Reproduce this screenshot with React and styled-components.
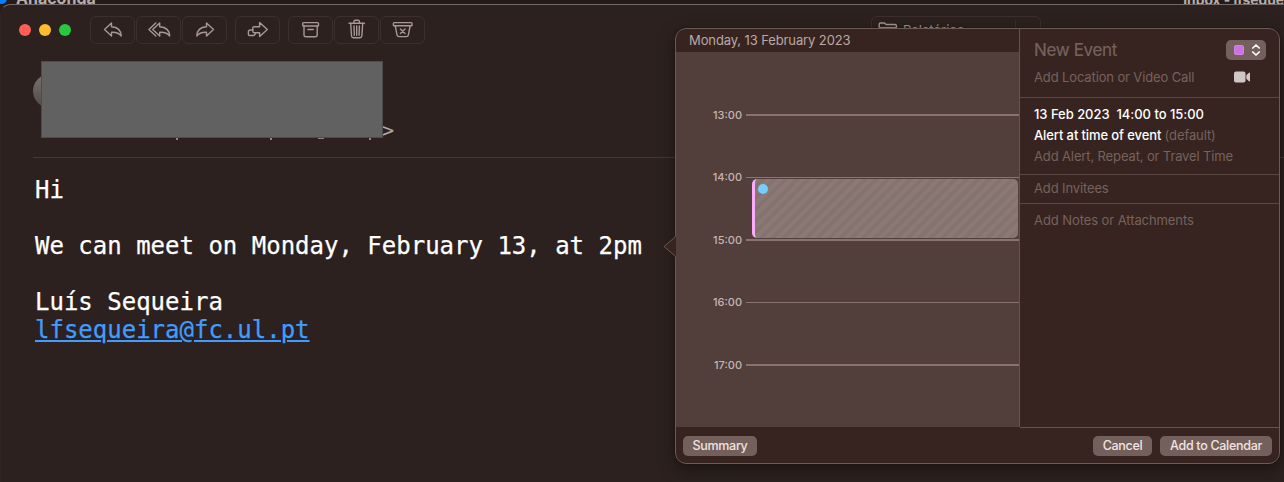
import React from "react";
import styled, { createGlobalStyle } from "styled-components";

const GlobalStyle = createGlobalStyle`
  body {
    margin: 0;
    background: #241b19;
    font-family: Inter, "Liberation Sans", sans-serif;
    overflow: hidden;
  }
`;

const Screen = styled.div`
  position: relative;
  width: 1284px;
  height: 482px;
  overflow: hidden;
  display: flex;
  flex-direction: column;
`;

const BackStrip = styled.div`
  height: 4px;
  display: flex;
  justify-content: space-between;
  align-items: flex-end;
  overflow: hidden;
  background: #241b19;
`;

const BackTitle = styled.span`
  font-size: ${(props) => props.$size}px;
  line-height: 16px;
  margin-bottom: ${(props) => props.$drop || 0}px;
  font-weight: 700;
  color: #b5aeac;
  white-space: nowrap;
`;

const BackLeft = styled.div`
  display: flex;
  align-items: flex-end;
  gap: 9px;
`;

const BlueDot = styled.i`
  width: 11px;
  height: 11px;
  margin-left: -4px;
  border-radius: 50%;
  background: #0a7cff;
`;

const Window = styled.div`
  flex: 1;
  background: #2c211e;
  border-top: 1px solid #736967;
  border-left: 1px solid #2f2522;
  border-top-left-radius: 10px;
`;

const Toolbar = styled.div`
  display: flex;
  align-items: center;
  height: 28px;
  padding: 11px 0 0 18px;
`;

const Lights = styled.div`
  display: flex;
  gap: 8px;
  margin-right: 19px;
`;

const Light = styled.i`
  width: 12px;
  height: 12px;
  border-radius: 50%;
  background: ${(props) => props.$color};
`;

const ButtonGroup = styled.div`
  display: flex;
  gap: 1px;
  margin-right: 8px;
`;

const ToolButton = styled.div`
  box-sizing: border-box;
  width: 45px;
  height: 28px;
  border: 1px solid #3b302d;
  border-radius: 6px;
  display: flex;
  align-items: center;
  justify-content: center;
`;

const FolderButton = styled.div`
  box-sizing: border-box;
  width: 170px;
  height: 28px;
  margin-left: 438px;
  padding-left: 6px;
  border: 1px solid #3b302d;
  border-radius: 6px;
  display: flex;
  align-items: center;
  gap: 5px;
  font-size: 13px;
  color: #a0928f;

  span {
    flex: 1;
  }
`;

const FolderMore = styled.div`
  width: 24px;
  height: 20px;
  border-left: 1px solid #3b302d;
`;

const MailHeader = styled.div`
  display: flex;
  align-items: flex-start;
  height: 96px;
  margin: 17px 0 0 32px;
  border-bottom: 1px solid #433835;
`;

const Avatar = styled.div`
  width: 34px;
  height: 34px;
  margin-top: 13px;
  border-radius: 50%;
  background: linear-gradient(#77726f, #504b49);
`;

const Redacted = styled.div`
  box-sizing: border-box;
  width: 342px;
  height: 77px;
  margin-left: -26px;
  background: #616161;
  border: 1px solid #4f4b4a;
  z-index: 1;
`;

const Cover = styled.div`
  display: flex;
  flex-direction: column;
`;

const Descenders = styled.div`
  display: flex;
  padding-left: 109px;
`;

const Tail = styled.i`
  width: ${(props) => props.$width || 2}px;
  height: ${(props) => (props.$width ? 1 : 2)}px;
  margin-right: ${(props) => props.$gap}px;
  background: #8d8583;
`;

const Bracket = styled.span`
  margin: 57px 0 0 -1px;
  font-family: "DejaVu Sans Mono", monospace;
  font-size: 20px;
  line-height: 24px;
  color: #b3aaa8;
`;

const MailBody = styled.div`
  padding: 18px 0 0 34px;
  font-family: "DejaVu Sans Mono", monospace;
  font-size: 24px;
  line-height: 28px;
  color: #fff;
  -webkit-text-stroke: 0.25px currentColor;

  p {
    margin: 0 0 28px;
  }
`;

const MailLink = styled.a`
  color: #419cff;
  text-decoration: underline;
  text-decoration-thickness: 2px;
  text-underline-offset: 2px;
`;

const Popover = styled.div`
  position: absolute;
  left: 675px;
  top: 28px;
  box-sizing: border-box;
  width: 605px;
  height: 436px;
  border: 1px solid #6b5b57;
  border-radius: 11px;
  background: #372420;
  box-shadow: 0 5px 18px rgba(0, 0, 0, 0.4), 0 0 1px #000;
  display: flex;
  flex-direction: column;
`;

const Pointer = styled.svg`
  position: absolute;
  left: -14px;
  top: 205px;
`;

const Columns = styled.div`
  display: flex;
  height: 398px;
`;

const DayColumn = styled.div`
  width: 343px;
  display: flex;
  flex-direction: column;
`;

const DayTitle = styled.div`
  height: 23px;
  padding-left: 13px;
  font-size: 13px;
  line-height: 23px;
  letter-spacing: -0.11px;
  color: #b9a9a6;
`;

const Timeline = styled.div`
  position: relative;
  box-sizing: border-box;
  height: 375px;
  padding-top: 31.5px;
  background: #523f3c;
`;

const HourRow = styled.div`
  height: 62.5px;
  display: flex;
  align-items: center;
  gap: 4px;
  font-size: 11px;
  font-weight: 500;
  color: #c5b5b2;

  span {
    width: 66px;
    text-align: right;
  }

  &::after {
    content: "";
    flex: 1;
    height: 1.5px;
    background: #88736f;
  }
`;

const EventBlock = styled.div`
  position: absolute;
  left: 76px;
  top: 127px;
  box-sizing: border-box;
  width: 266px;
  height: 59px;
  padding: 5px 3px;
  border-left: 3px solid #fbabf8;
  border-radius: 5px;
  background: repeating-linear-gradient(135deg, #8b7975 0 4px, #85736f 4px 8px);
`;

const EventDot = styled.i`
  display: block;
  width: 10px;
  height: 10px;
  border-radius: 50%;
  background: #74ccff;
`;

const Details = styled.div`
  flex: 1;
  border-left: 1px solid #66524e;
  font-size: 13px;
  color: #75625e;
`;

const Section = styled.div`
  box-sizing: border-box;
  height: ${(props) => props.$height}px;
  padding: ${(props) => props.$top}px 13px 0 14px;
  border-bottom: ${(props) => (props.$last ? "0" : "1px solid #5a4642")};
`;

const Line = styled.div`
  display: flex;
  align-items: center;
  height: 21px;
  white-space: pre;
  letter-spacing: ${(props) => props.$spacing || 0}px;
`;

const Strong = styled.span`
  color: #fff;
  font-weight: 500;
`;

const TitleLine = styled.div`
  display: flex;
  align-items: center;
  justify-content: space-between;
  height: 28px;
  font-size: 17px;
  letter-spacing: -0.35px;
  -webkit-text-stroke: 0.2px currentColor;
`;

const PlaceLine = styled.div`
  display: flex;
  align-items: center;
  justify-content: space-between;
  height: 26px;
  padding-right: 15px;
  letter-spacing: -0.13px;
`;

const CalendarPicker = styled.div`
  box-sizing: border-box;
  width: 40px;
  height: 20px;
  padding: 0 5px 0 8px;
  border-radius: 5px;
  background: #74605c;
  display: flex;
  align-items: center;
  justify-content: space-between;
`;

const Swatch = styled.i`
  box-sizing: border-box;
  width: 10px;
  height: 10px;
  border: 1px solid #d482e6;
  border-radius: 2px;
  background: #cb73e0;
`;

const Footer = styled.div`
  flex: 1;
  display: flex;
  align-items: center;
  gap: 8px;
  padding: 0 7px;
`;

const FooterButton = styled.button`
  box-sizing: border-box;
  width: ${(props) => props.$width}px;
  height: 20px;
  padding: 0;
  margin-right: ${(props) => (props.$first ? "auto" : "0")};
  border: 0;
  border-radius: 5px;
  background: #73605c;
  color: #f4e3e0;
  font-family: inherit;
  font-size: 12.5px;
  font-weight: 500;
  line-height: 19px;
  letter-spacing: -0.3px;
  white-space: nowrap;
`;

const FooterRule = styled.div`
  height: 1px;
  margin-left: 344px;
  background: #66524e;
`;

const Icon = ({ width = 22, children }) => (
  <svg
    width={width}
    height="22"
    viewBox={`0 0 ${width} 22`}
    fill="none"
    stroke="#a89794"
    strokeWidth="1.4"
    strokeLinejoin="round"
    strokeLinecap="round"
  >
    {children}
  </svg>
);

const ReplyIcon = () => (
  <Icon>
    <path d="M9.500 4 2.500 10.600l7 6.400v-3.800c4.500-.2 7.500.5 9.700 3.800-.2-5.400-3.400-8.800-9.700-9.200z" />
  </Icon>
);

const ReplyAllIcon = () => (
  <Icon width={24}>
    <path d="M12.700 4 5.700 10.600l7 6.400v-3.800c4.500-.2 7.900.5 10 3.800-.2-5.400-3.700-8.800-10-9.200z" />
    <path d="M8.800 4 1.900 10.600l6.900 6.400" />
  </Icon>
);

const ForwardIcon = () => (
  <Icon>
    <path d="M12.500 4l7 6.600-7 6.400v-3.800c-4.500-.2-7.500.5-9.700 3.800.2-5.400 3.400-8.800 9.700-9.200z" />
  </Icon>
);

const RedirectIcon = () => (
  <Icon>
    <path d="M12.600 3.500l7.700 7.100-7.700 7v-3.900H7.200c-.9 0-1.400-.5-1.400-1.400V9.100c0-.9.5-1.400 1.400-1.400h5.400z" />
    <path d="M5.600 11H3.200c-1.100 0-1.800.6-1.800 1.700v2.700c0 .7.400 1.100 1.100 1.100h4c1 0 1.700-.8 2-2.600" />
  </Icon>
);

const ArchiveIcon = () => (
  <Icon>
    <rect x="2.700" y="3.600" width="15.800" height="3.400" rx="0.8" />
    <path d="M4 7v8.800c0 1.200.7 1.900 1.900 1.900h9.400c1.200 0 1.900-.7 1.900-1.900V7M7.900 10.500h5.400" />
  </Icon>
);

const TrashIcon = () => (
  <Icon>
    <path d="M3 4.300h15.400M8 4V2.600C8 1.700 8.400 1.300 9.300 1.300h2.800c.9 0 1.300.4 1.300 1.300V4" />
    <path d="M4.700 4.500l.8 12.300c.1 1.200.8 1.900 1.900 1.900H14c1.100 0 1.800-.7 1.900-1.900l.8-12.300M8 7l.3 9.200M10.700 7v9.200M13.400 7l-.3 9.200" />
  </Icon>
);

const JunkIcon = () => (
  <Icon>
    <rect x="1.400" y="3.600" width="18.600" height="3.200" rx="0.8" />
    <path d="M3.300 7l1.700 8.900c.2 1.100.9 1.700 2 1.700h7.400c1.100 0 1.800-.6 2-1.700L18.100 7M8.400 10l4.600 4.600M13 10l-4.600 4.600" />
  </Icon>
);

const HOURS = ["13:00", "14:00", "15:00", "16:00", "17:00"];

const App = () => {
  return (
    <Screen>
      <GlobalStyle />
      <BackStrip>
        <BackLeft>
          <BlueDot />
          <BackTitle $size={16} $drop={-2}>Anaconda</BackTitle>
        </BackLeft>
        <BackTitle $size={13.8} $drop={-4}>Inbox - lfseque</BackTitle>
      </BackStrip>

      <Window>
        <Toolbar>
          <Lights>
            <Light $color="#ff5f57" />
            <Light $color="#febc2e" />
            <Light $color="#28c840" />
          </Lights>
          <ButtonGroup>
            <ToolButton><ReplyIcon /></ToolButton>
            <ToolButton><ReplyAllIcon /></ToolButton>
            <ToolButton><ForwardIcon /></ToolButton>
          </ButtonGroup>
          <ButtonGroup>
            <ToolButton><RedirectIcon /></ToolButton>
          </ButtonGroup>
          <ButtonGroup>
            <ToolButton><ArchiveIcon /></ToolButton>
            <ToolButton><TrashIcon /></ToolButton>
            <ToolButton><JunkIcon /></ToolButton>
          </ButtonGroup>
          <FolderButton>
            <Icon width={20}>
              <path d="M1.200 16V5.300c0-.8.4-1.300 1.300-1.300h4l1.600 1.500h9c.8 0 1.300.5 1.300 1.300v9.700M1.500 8.700h17" />
            </Icon>
            <span>Relatórios</span>
            <FolderMore />
          </FolderButton>
        </Toolbar>

        <MailHeader>
          <Avatar />
          <Cover>
            <Redacted />
            <Descenders>
              <Tail $gap={92} />
              <Tail $gap={46} />
              <Tail $width={6} $gap={45} />
              <Tail $gap={0} />
            </Descenders>
          </Cover>
          <Bracket>&gt;</Bracket>
        </MailHeader>

        <MailBody>
          <p>Hi</p>
          <p>We can meet on Monday, February 13, at 2pm</p>
          <div>Luís Sequeira</div>
          <MailLink>lfsequeira@fc.ul.pt</MailLink>
        </MailBody>
      </Window>

      <Popover>
        <Pointer width="14" height="25" viewBox="0 0 14 25">
          <path d="M14 0C14 2 13.500 2.500 12 4L2 12.500l10 8.500c1.500 1.500 2 2 2 4z" fill="#372420" />
          <path d="M13.500 1c0 1-.5 2-1.500 3L2 12.500 12 21c1 1 1.500 2 1.500 3" fill="none" stroke="#6b5b57" />
        </Pointer>
        <Columns>
          <DayColumn>
            <DayTitle>Monday, 13 February 2023</DayTitle>
            <Timeline>
              {HOURS.map((hour) => (
                <HourRow key={hour}>
                  <span>{hour}</span>
                </HourRow>
              ))}
              <EventBlock>
                <EventDot />
              </EventBlock>
            </Timeline>
          </DayColumn>

          <Details>
            <Section $height={69} $top={7}>
              <TitleLine>
                New Event
                <CalendarPicker>
                  <Swatch />
                  <svg width="10" height="14" viewBox="0 0 10 14" fill="none" stroke="#fff" strokeWidth="1.7" strokeLinecap="round" strokeLinejoin="round">
                    <path d="M1.800 5 5 2l3.200 3M1.800 9 5 12l3.200-3" />
                  </svg>
                </CalendarPicker>
              </TitleLine>
              <PlaceLine>
                Add Location or Video Call
                <svg width="18" height="12" viewBox="0 0 18 12" fill="#d0c8c6">
                  <rect x="1" y="0.500" width="11.500" height="11" rx="2" />
                  <path d="M13.300 4.300 16 1.800c.5-.4 1-.2 1 .4v7.600c0 .6-.5.800-1 .4l-2.700-2.500z" />
                </svg>
              </PlaceLine>
            </Section>
            <Section $height={77} $top={5}>
              <Line $spacing={-0.03}><Strong>13 Feb 2023  14:00 to 15:00</Strong></Line>
              <Line $spacing={-0.11}><Strong>Alert at time of event </Strong>(default)</Line>
              <Line $spacing={-0.13}>Add Alert, Repeat, or Travel Time</Line>
            </Section>
            <Section $height={29} $top={2}>
              <Line $spacing={-0.13}>Add Invitees</Line>
            </Section>
            <Section $height={40} $top={5} $last>
              <Line $spacing={-0.08}>Add Notes or Attachments</Line>
            </Section>
          </Details>
        </Columns>
        <FooterRule />
        <Footer>
          <FooterButton $width={74} $first>Summary</FooterButton>
          <FooterButton $width={59}>Cancel</FooterButton>
          <FooterButton $width={112}>Add to Calendar</FooterButton>
        </Footer>
      </Popover>
    </Screen>
  );
};

export default App;
